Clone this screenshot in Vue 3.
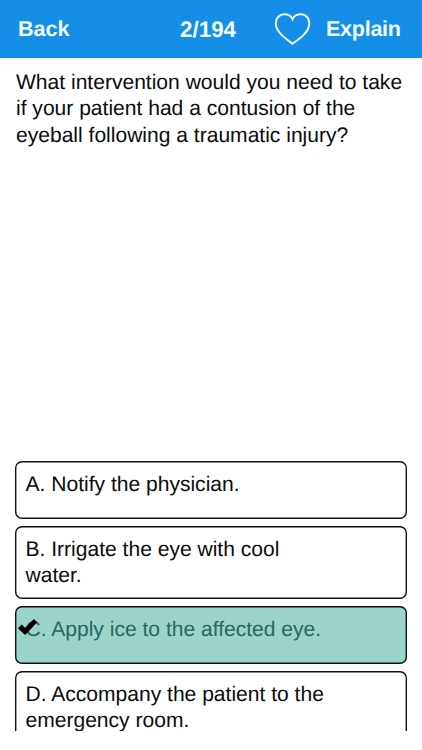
<script setup>
import { ref } from 'vue'

const question = ['What intervention would you need to take', 'if your patient had a contusion of the', 'eyeball following a traumatic injury?']
const answers = [
  { id: 'A', lines: ['A. Notify the physician.'] },
  { id: 'B', lines: ['B. Irrigate the eye with cool', 'water.'] },
  { id: 'C', lines: ['C. Apply ice to the affected eye.'] },
  { id: 'D', lines: ['D. Accompany the patient to the', 'emergency room.'] }
]
const selected = ref('C')
</script>

<template>
  <div class="screen">
    <header class="bar">
      <span class="back">Back</span>
      <span class="count">2/194</span>
      <svg class="heart" width="38" height="34" viewBox="0 0 38 34">
        <path d="M18.5 31.7C13 27.5 1.8 20.5 1.8 11.5C1.8 5.8 5.6 2.3 10.3 2.3C14.3 2.3 17.2 4.2 18.5 7.2C19.8 4.2 23 2.3 27 2.3C31.7 2.3 35.3 5.8 35.3 11.5C35.3 20.5 24.5 27.5 18.5 31.7Z" />
      </svg>
      <span class="explain">Explain</span>
    </header>
    <div class="question">
      <div v-for="line in question" :key="line">{{ line }}</div>
    </div>
    <div class="answers">
      <div v-for="a in answers" :key="a.id" class="answer" :class="{ correct: a.id === selected, tall: a.lines.length > 1 }" @click="selected = a.id">
        <div v-for="line in a.lines" :key="line">{{ line }}</div>
        <svg v-if="a.id === selected" class="check" width="20" height="17" viewBox="0 0 20 17">
          <path d="M0 9.2L3.6 5.6L7.2 8.8L16 0L19.2 3.2L7.8 15.4L6.4 15.4Z" />
        </svg>
      </div>
    </div>
  </div>
</template>

<style>
body {
  background: #fff;
}
</style>

<style scoped>
.screen {
  width: 422px;
  height: 731px;
  overflow: hidden;
  display: flex;
  flex-direction: column;
  font-family: "Liberation Sans", Arial, sans-serif;
  font-size: 21.05px;
  line-height: 26.4px;
  color: #0c0c0c;
  white-space: nowrap;
  text-rendering: geometricPrecision;
}
.bar {
  height: 58px;
  flex: none;
  display: flex;
  align-items: center;
  box-sizing: border-box;
  padding-left: 18px;
  background: #148ee6;
  color: #f0fbff;
  font-size: 21.6px;
  font-weight: bold;
}
.back {
  width: 162px;
}
.count {
  width: 94px;
  padding-top: 2px;
  font-size: 22.4px;
}
.heart {
  width: 38px;
  flex: none;
  fill: none;
  stroke: #e8fbff;
  stroke-width: 2;
}
.explain {
  margin-left: 14px;
  font-size: 21.6px;
  letter-spacing: -0.3px;
}
.question {
  box-sizing: border-box;
  padding: 12px 16px 0;
  height: 403px;
  flex: none;
}
.answers {
  display: flex;
  flex-direction: column;
  gap: 6.6px;
  padding: 0 15px;
}
.answer {
  position: relative;
  box-sizing: border-box;
  height: 58px;
  flex: none;
  padding: 11px 10.5px 0;
  border-radius: 7px;
  box-shadow: inset 0 0 0 1.4px #111;
}
.tall {
  height: 73.8px;
}
.correct {
  background: #9bd5ca;
  color: #24685e;
}
.check {
  position: absolute;
  left: 3px;
  top: 12.8px;
  fill: #000;
}
</style>
